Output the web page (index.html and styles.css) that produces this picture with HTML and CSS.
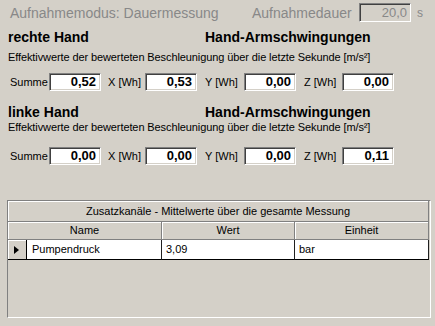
FILE: index.html
```html
<!DOCTYPE html>
<html lang="de">
<head>
<meta charset="utf-8">
<title>Hand-Armschwingungen</title>
<link rel="stylesheet" href="styles.css">
</head>
<body>
<div class="panel">
  <div class="top">
    <span class="mode">Aufnahmemodus: Dauermessung</span>
    <span class="dur-label">Aufnahmedauer</span>
    <span class="dur-box">20,0</span>
    <span class="unit">s</span>
  </div>

  <section class="hand hand-right">
    <div class="titles"><span class="t1">rechte Hand</span><span class="t2">Hand-Armschwingungen</span></div>
    <div class="desc">Effektivwerte der bewerteten Beschleunigung über die letzte Sekunde [m/s²]</div>
    <div class="fields">
      <span class="lbl l-sum">Summe</span><span class="val">0,52</span>
      <span class="lbl l-x">X [Wh]</span><span class="val">0,53</span>
      <span class="lbl l-y">Y [Wh]</span><span class="val">0,00</span>
      <span class="lbl l-z">Z [Wh]</span><span class="val">0,00</span>
    </div>
  </section>

  <section class="hand hand-left">
    <div class="titles"><span class="t1">linke Hand</span><span class="t2">Hand-Armschwingungen</span></div>
    <div class="desc">Effektivwerte der bewerteten Beschleunigung über die letzte Sekunde [m/s²]</div>
    <div class="fields">
      <span class="lbl l-sum">Summe</span><span class="val">0,00</span>
      <span class="lbl l-x">X [Wh]</span><span class="val">0,00</span>
      <span class="lbl l-y">Y [Wh]</span><span class="val">0,00</span>
      <span class="lbl l-z">Z [Wh]</span><span class="val">0,11</span>
    </div>
  </section>

  <div class="grid">
    <div class="caption">Zusatzkanäle - Mittelwerte über die gesamte Messung</div>
    <div class="row head">
      <div class="cell h-name">Name</div>
      <div class="cell c-wert">Wert</div>
      <div class="cell c-unit">Einheit</div>
    </div>
    <div class="row data">
      <div class="cell ind"><span class="arrow"></span></div>
      <div class="cell c-name">Pumpendruck</div>
      <div class="cell c-wert">3,09</div>
      <div class="cell c-unit">bar</div>
    </div>
  </div>
</div>
</body>
</html>
```

FILE: styles.css
```css
html, body {
  margin: 0;
  padding: 0;
  background: #d4d0c8;
}
body {
  width: 435px;
  height: 326px;
  overflow: hidden;
  font-family: "Liberation Sans", Arial, sans-serif;
  color: #000;
}
.panel {
  padding: 3px 0 0 0;
}
.top {
  display: flex;
  align-items: center;
  height: 19px;
  color: #888888;
  font-size: 14px;
}
.mode {
  margin-left: 10px;
  width: 242px;
}
.dur-label {
  width: 107px;
}
.dur-box {
  box-sizing: border-box;
  width: 52px;
  height: 19px;
  border-top: 1px solid #808080;
  border-left: 1px solid #808080;
  border-right: 1px solid #fff;
  border-bottom: 1px solid #fff;
  box-shadow: inset 1px 1px 0 #404040;
  text-align: right;
  padding-right: 3px;
  line-height: 17px;
  font-size: 13px;
  color: #888888;
}
.unit {
  margin-left: 6px;
  font-size: 12px;
}
.hand {
  padding-left: 8px;
}
.hand-right {
  margin-top: 7px;
}
.hand-left {
  margin-top: 13px;
}
.titles {
  display: flex;
  font-weight: bold;
  font-size: 14px;
  height: 16px;
  line-height: 16px;
}
.t1 {
  width: 197px;
}
.desc {
  font-size: 11px;
  letter-spacing: -0.1px;
  height: 15px;
  line-height: 15px;
  margin-top: 5px;
}
.hand-left .desc {
  margin-top: 0;
}
.fields {
  display: flex;
  align-items: center;
  margin-top: 8px;
  height: 18px;
  font-size: 11px;
}
.hand-left .fields {
  margin-top: 12px;
}
.lbl {
  box-sizing: border-box;
}
.l-sum { width: 41px; padding-left: 2px; }
.l-x { width: 44px; padding-left: 7px; }
.l-y { width: 47px; padding-left: 8px; }
.l-z { width: 46px; padding-left: 8px; }
.val {
  box-sizing: border-box;
  width: 52px;
  height: 18px;
  background: #fff;
  border-top: 1px solid #808080;
  border-left: 1px solid #808080;
  border-right: 1px solid #fff;
  border-bottom: 1px solid #fff;
  box-shadow: inset 1px 1px 0 #404040, inset -1px -1px 0 #d4d0c8;
  text-align: right;
  font-weight: bold;
  font-size: 13px;
  line-height: 16px;
  padding-right: 4px;
}
.grid {
  box-sizing: border-box;
  margin: 35px 0 0 7px;
  width: 424px;
  height: 118px;
  border-top: 1px solid #808080;
  border-left: 1px solid #808080;
  border-right: 1px solid #fff;
  border-bottom: 1px solid #fff;
  font-size: 11px;
}
.caption {
  box-sizing: border-box;
  height: 21px;
  line-height: 20px;
  text-align: center;
  border-bottom: 1px solid #808080;
  border-right: 1px solid #808080;
  box-shadow: inset 1px 1px 0 #fff;
  width: 421px;
}
.row {
  display: flex;
}
.cell {
  box-sizing: border-box;
}
.head .cell {
  height: 18px;
  line-height: 17px;
  text-align: center;
  border-right: 1px solid #808080;
  border-bottom: 1px solid #808080;
  box-shadow: inset 1px 1px 0 #fff;
}
.h-name { width: 154px; }
.ind { width: 19px; }
.c-name { width: 135px; }
.c-wert { width: 133px; }
.c-unit { width: 134px; }
.data .cell {
  height: 20px;
  line-height: 19px;
  background: #fff;
  border-right: 1px solid #202020;
  border-bottom: 1px solid #000;
  padding-left: 4px;
}
.data .c-name { padding-left: 5px; }
.data .ind {
  background: #d4d0c8;
  position: relative;
  padding-left: 0;
  box-shadow: inset 1px 1px 0 #fff;
  border-right: 1px solid #000;
}
.arrow {
  position: absolute;
  left: 6px;
  top: 6px;
  width: 0;
  height: 0;
  border-top: 4px solid transparent;
  border-bottom: 4px solid transparent;
  border-left: 5px solid #000;
}
```
